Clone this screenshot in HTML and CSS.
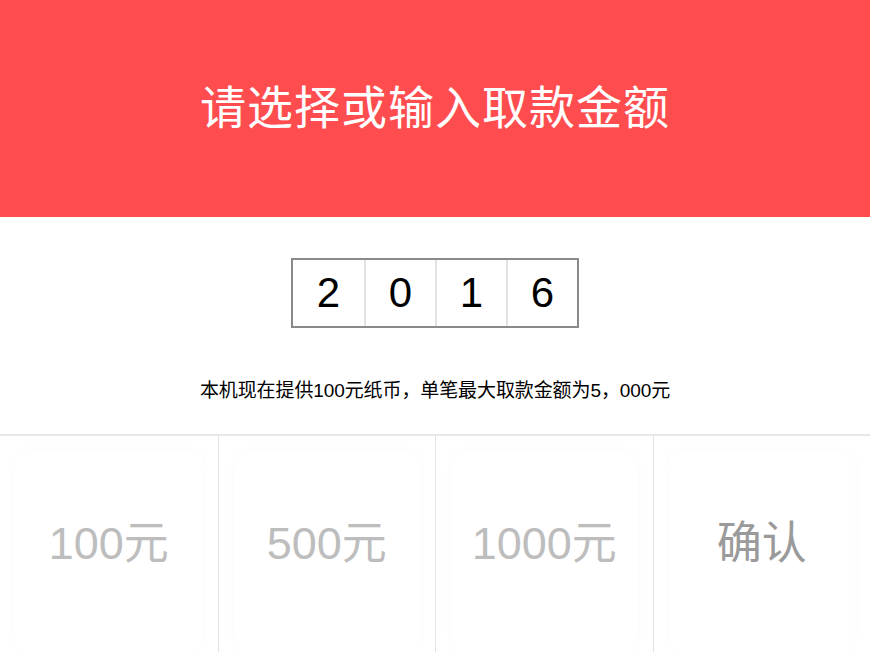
FILE: index.html
```html
<!DOCTYPE html>
<html lang="zh-CN">
<head>
<meta charset="utf-8">
<title>取款</title>
<link rel="stylesheet" href="styles.css">
</head>
<body>
<div class="page">
  <header class="header">
    <h1 class="title">请选择或输入取款金额</h1>
  </header>
  <section class="amount">
    <div class="digits">
      <span class="digit">2</span>
      <span class="digit">0</span>
      <span class="digit">1</span>
      <span class="digit">6</span>
    </div>
    <p class="info">本机现在提供100元纸币，单笔最大取款金额为5，000元</p>
  </section>
  <section class="keys">
    <div class="key"><div class="key-inner amt">100元</div></div>
    <div class="key"><div class="key-inner amt">500元</div></div>
    <div class="key"><div class="key-inner amt">1000元</div></div>
    <div class="key"><div class="key-inner ok">确认</div></div>
  </section>
</div>
</body>
</html>
```
FILE: styles.css
```css
* { box-sizing: border-box; }
html, body {
  margin: 0;
  padding: 0;
  background: #fff;
  font-family: "Liberation Sans", "Noto Sans CJK SC", sans-serif;
}
.page {
  width: 870px;
  height: 652px;
  overflow: hidden;
  display: flex;
  flex-direction: column;
}
.header {
  height: 217px;
  background: #ff4d4f;
  display: flex;
  align-items: center;
  justify-content: center;
}
.title {
  margin: 0;
  color: #fff;
  font-weight: normal;
  font-size: 46px;
  letter-spacing: 1px;
  line-height: 1;
  padding-bottom: 2px;
}
.amount {
  height: 217px;
  display: flex;
  flex-direction: column;
  align-items: center;
  padding-top: 41px;
}
.digits {
  display: flex;
  border: 2px solid #8a8a8a;
  height: 70px;
}
.digit {
  width: 71px;
  display: flex;
  align-items: center;
  justify-content: center;
  font-size: 42px;
  color: #000;
  border-left: 2px solid #e3e3e3;
}
.digit:first-child { border-left: none; }
.info {
  margin: 53px 0 0;
  font-size: 19px;
  color: #000;
  line-height: 20px;
  letter-spacing: -0.1px;
}
.keys {
  flex: 1;
  display: grid;
  grid-template-columns: repeat(4, 1fr);
  border-top: 2px solid #e8e8e8;
}
.key {
  border-left: 1px solid #e2e2e2;
  padding: 14px 15px 0;
  display: flex;
}
.key:first-child { border-left: none; }
.key-inner {
  flex: 1;
  border-radius: 14px;
  box-shadow: 0 0 12px rgba(0,0,0,0.018);
  display: flex;
  align-items: center;
  justify-content: center;
  font-size: 45px;
  padding-bottom: 24px;
}
.amt { color: #bdbdbd; }
.ok { color: #9a9a9a; }
```
